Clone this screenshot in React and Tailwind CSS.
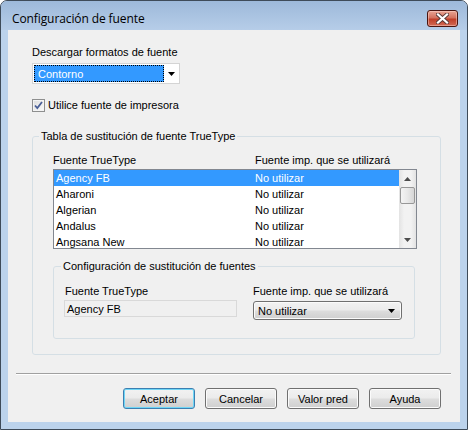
import React from "react";

const rows = ["Agency FB", "Aharoni", "Algerian", "Andalus", "Angsana New"];

function DownArrow({ className = "" }) {
  return (
    <svg width="7" height="4" viewBox="0 0 7 4" className={className}>
      <path d="M0 0H7L3.5 4Z" fill="#000" />
    </svg>
  );
}

function Btn({ children, def }) {
  return (
    <div
      className={
        "w-[72px] h-[21px] rounded-[3px] border flex items-center justify-center text-[11px] leading-[14px] text-black bg-[linear-gradient(#f2f2f2_0%,#ebebeb_48%,#dddddd_52%,#cfcfcf_100%)] " +
        (def
          ? "border-[#3c7fb1] shadow-[inset_0_0_0_1px_#6fd6f6]"
          : "border-[#707070] shadow-[inset_0_0_0_1px_#fbfbfb]")
      }
    >
      {children}
    </div>
  );
}

export default function App() {
  return (
    <div className="w-[468px] h-[430px] border border-[#3e4b59] rounded-t-[7px] bg-[#bcd3ec] flex flex-col font-['Liberation_Sans',Arial,sans-serif] overflow-hidden">
      {/* Title bar */}
      <div className="h-[29px] shrink-0 flex items-start justify-between pl-[11px] pr-[9px] bg-[linear-gradient(#9db9da,#b6cde8)]">
        <div className="pt-[10px] text-[12px] leading-[16px] text-black font-['Open_Sans','Liberation_Sans',sans-serif] tracking-[-0.1px]">
          Configuración de fuente
        </div>
        <div className="mt-[9px] w-[31px] h-[17px] rounded-[3px] border border-[#4a1510] bg-[linear-gradient(#e9a594,#d4725f_45%,#c03f29_55%,#d26a55)] shadow-[inset_0_0_0_1px_rgba(255,220,210,0.45)] flex items-center justify-center">
          <svg width="13" height="11" viewBox="0 0 13 11">
            <path d="M2 1.5L11 9.5M11 1.5L2 9.5" stroke="#5a3a38" strokeWidth="4" strokeLinecap="square" />
            <path d="M2 1.5L11 9.5M11 1.5L2 9.5" stroke="#ffffff" strokeWidth="2.2" strokeLinecap="square" />
          </svg>
        </div>
      </div>

      {/* Client area */}
      <div className="mx-[7px] h-[392px] shrink-0 bg-[#f0f0f0] flex flex-col text-[11px] leading-[14px] text-black">
        <div className="pl-[24px] pt-[15px]">Descargar formatos de fuente</div>

        {/* Combobox */}
        <div className="ml-[24px] mt-[4px] w-[148px] h-[21px] border border-[#d4d4d4] bg-white flex items-center">
          <div className="ml-[1px] w-[130px] h-[17px] bg-[#3399ff] border border-dotted border-black text-white pl-[3px] flex items-center">
            Contorno
          </div>
          <div className="flex-1 flex items-center justify-center">
            <DownArrow />
          </div>
        </div>

        {/* Checkbox */}
        <div className="ml-[24px] mt-[14px] flex items-center gap-[3px]">
          <div className="w-[13px] h-[13px] border border-[#8e8f8f] bg-[linear-gradient(135deg,#dcdcdc,#fbfbfb)] flex items-center justify-center">
            <svg width="11" height="11" viewBox="0 0 11 11">
              <rect x="0.5" y="0.5" width="10" height="10" fill="none" stroke="#f4f4f4" />
              <path d="M2 5.5L4.3 8L9 2" fill="none" stroke="#4a5f97" strokeWidth="1.8" />
            </svg>
          </div>
          <span>Utilice fuente de impresora</span>
        </div>

        {/* Group 1 */}
        <fieldset className="ml-[24px] mt-[17px] w-[409px] h-[226px] border border-[#d5dfe5] rounded-[3px]">
          <legend className="ml-[6px] px-[2px] leading-[14px]">Tabla de sustitución de fuente TrueType</legend>
          <div className="pl-[20px]">
            <div className="mt-[10px] flex">
              <div className="w-[202px]">Fuente TrueType</div>
              <div>Fuente imp. que se utilizará</div>
            </div>
            <div className="mt-[2px] w-[364px] h-[80px] border border-[#828790] bg-white flex overflow-hidden">
              <div className="flex-1 flex flex-col">
                {rows.map((r, i) => (
                  <div
                    key={r}
                    className={
                      "h-[16px] shrink-0 flex items-center " +
                      (i === 0 ? "bg-[#3399ff] text-white" : "text-black")
                    }
                  >
                    <div className="w-[201px] pl-[2px]">{r}</div>
                    <div>No utilizar</div>
                  </div>
                ))}
              </div>
              {/* Scrollbar */}
              <div className="w-[17px] flex flex-col bg-[linear-gradient(to_right,#e3e3e3,#f2f2f2_30%,#f2f2f2_70%,#e3e3e3)]">
                <div className="h-[17px] flex items-center justify-center">
                  <svg width="7" height="4" viewBox="0 0 7 4">
                    <path d="M0 4H7L3.5 0Z" fill="#4d4d4d" />
                  </svg>
                </div>
                <div className="mx-[1px] h-[17px] rounded-[2px] border border-[#979797] bg-[linear-gradient(to_right,#f4f4f4,#e8e8e8_50%,#d6d6d6)]" />
                <div className="flex-1" />
                <div className="h-[17px] flex items-center justify-center">
                  <svg width="7" height="4" viewBox="0 0 7 4">
                    <path d="M0 0H7L3.5 4Z" fill="#4d4d4d" />
                  </svg>
                </div>
              </div>
            </div>

            {/* Group 2 */}
            <fieldset className="mt-[10px] w-[362px] h-[80px] border border-[#d5dfe5] rounded-[3px]">
              <legend className="ml-[7px] px-[2px] leading-[14px]">Configuración de sustitución de fuentes</legend>
              <div className="pl-[10px] mt-[11px] flex gap-[16px]">
                <div className="w-[173px] flex flex-col">
                  <div className="pl-[1px]">Fuente TrueType</div>
                  <div className="mt-[2px] h-[17px] border border-[#d9d9d9] bg-[#f0f0f0] pl-[2px] flex items-center">
                    Agency FB
                  </div>
                </div>
                <div className="w-[149px] flex flex-col">
                  <div>Fuente imp. que se utilizará</div>
                  <div className="mt-[3px] h-[19px] rounded-[3px] border border-[#707070] bg-[linear-gradient(#f2f2f2_0%,#ebebeb_48%,#dddddd_52%,#cfcfcf_100%)] shadow-[inset_0_0_0_1px_#fbfbfb] pl-[4px] pr-[6px] flex items-center justify-between">
                    <span>No utilizar</span>
                    <DownArrow />
                  </div>
                </div>
              </div>
            </fieldset>
          </div>
        </fieldset>

        {/* Separator */}
        <div className="ml-[8px] mt-[18px] w-[435px] border-t border-t-[#a0a0a0] border-b border-b-white" />

        {/* Buttons */}
        <div className="mt-[13px] ml-[115px] flex gap-[10px]">
          <Btn def>Aceptar</Btn>
          <Btn>Cancelar</Btn>
          <Btn>Valor pred</Btn>
          <Btn>Ayuda</Btn>
        </div>
      </div>
    </div>
  );
}
